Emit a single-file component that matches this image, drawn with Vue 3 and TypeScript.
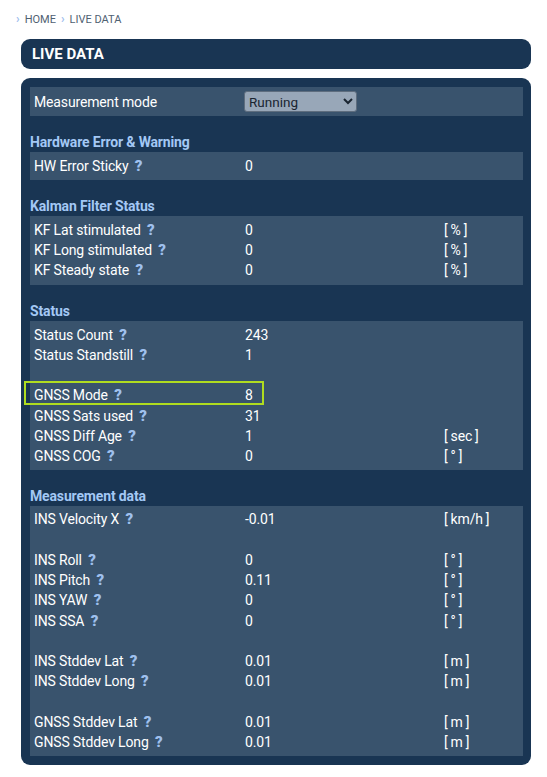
<template>
    <div class="page">
        <nav class="crumbs">
            <span class="crumbs__sep">›</span>
            <span>HOME</span>
            <span class="crumbs__sep">›</span>
            <span>LIVE DATA</span>
        </nav>
        <h1 class="title">LIVE DATA</h1>
        <div class="panel">
            <div class="mode">
                <label class="mode__label" for="mode">Measurement mode</label>
                <select id="mode" class="mode__select">
                    <option>Running</option>
                    <option>Idle</option>
                </select>
            </div>
            <section v-for="section in sections" :key="section.title" class="section">
                <h2 class="section__title">{{ section.title }}</h2>
                <div class="block" :class="{ 'block--short': section.rows.length < 4 }">
                    <div
                        v-for="(row, i) in section.rows"
                        :key="i"
                        class="row"
                        :class="{ 'row--marked': row && row.marked }"
                    >
                        <template v-if="row">
                            <span class="row__label">
                                {{ row.label }}
                                <span class="row__help">?</span>
                            </span>
                            <span>{{ row.value }}</span>
                            <span v-if="row.unit" class="row__unit">
                                <span>[</span>{{ row.unit }}<span>]</span>
                            </span>
                        </template>
                    </div>
                </div>
            </section>
        </div>
    </div>
</template>

<script setup lang="ts">
interface Row {
    label: string;
    value: string;
    unit?: string;
    marked?: boolean;
}

interface Section {
    title: string;
    rows: (Row | null)[];
}

// null = leere Zeile als Abstand
const sections: Section[] = [
    {
        title: 'Hardware Error & Warning',
        rows: [{ label: 'HW Error Sticky', value: '0' }],
    },
    {
        title: 'Kalman Filter Status',
        rows: [
            { label: 'KF Lat stimulated', value: '0', unit: '%' },
            { label: 'KF Long stimulated', value: '0', unit: '%' },
            { label: 'KF Steady state', value: '0', unit: '%' },
        ],
    },
    {
        title: 'Status',
        rows: [
            { label: 'Status Count', value: '243' },
            { label: 'Status Standstill', value: '1' },
            null,
            { label: 'GNSS Mode', value: '8', marked: true },
            { label: 'GNSS Sats used', value: '31' },
            { label: 'GNSS Diff Age', value: '1', unit: 'sec' },
            { label: 'GNSS COG', value: '0', unit: '°' },
        ],
    },
    {
        title: 'Measurement data',
        rows: [
            { label: 'INS Velocity X', value: '-0.01', unit: 'km/h' },
            null,
            { label: 'INS Roll', value: '0', unit: '°' },
            { label: 'INS Pitch', value: '0.11', unit: '°' },
            { label: 'INS YAW', value: '0', unit: '°' },
            { label: 'INS SSA', value: '0', unit: '°' },
            null,
            { label: 'INS Stddev Lat', value: '0.01', unit: 'm' },
            { label: 'INS Stddev Long', value: '0.01', unit: 'm' },
            null,
            { label: 'GNSS Stddev Lat', value: '0.01', unit: 'm' },
            { label: 'GNSS Stddev Long', value: '0.01', unit: 'm' },
        ],
    },
];
</script>

<style>
html,
body {
    background: #fff;
}
</style>

<style scoped>
.page {
    width: 547px;
    height: 777px;
    box-sizing: border-box;
    padding: 12px 16px 0 21px;
    font-family: Roboto, "Liberation Sans", sans-serif;
    font-size: 14px;
    letter-spacing: -0.15px;
    overflow: hidden;
}
.crumbs {
    display: flex;
    align-items: center;
    gap: 5px;
    height: 14px;
    margin-left: -5px;
    font-size: 11px;
    letter-spacing: 0;
    color: #4f6172;
}
.crumbs__sep {
    color: #9fc0ee;
    font-size: 12px;
    font-weight: 700;
}
.title {
    margin: 13px 0 9px;
    height: 30px;
    padding-left: 11px;
    border-radius: 9px;
    background: #193553;
    color: #fff;
    font-size: 15px;
    font-weight: 700;
    letter-spacing: 0;
    line-height: 30px;
}
.panel {
    height: 687px;
    box-sizing: border-box;
    padding: 9px 8px 0 9px;
    border-radius: 9px;
    background: #193553;
    color: #fff;
}
.mode {
    display: grid;
    grid-template-columns: 210px auto;
    justify-content: start;
    align-items: center;
    height: 29px;
    padding-left: 4px;
    background: #39536d;
}
.mode__select {
    width: 113px;
    height: 21px;
    font-family: inherit;
    font-size: 13.5px;
    background: #98a7b8;
    color: #1a2531;
    border: 1px solid #5e6d7e;
    border-radius: 3px;
}
.section__title {
    margin: 0;
    height: 36px;
    box-sizing: border-box;
    padding-top: 17px;
    color: #a3c8f5;
    font-size: 14px;
    font-weight: 700;
    line-height: 19px;
}
.block {
    padding: 3.5px 0 3.5px 4px;
    background: #39536d;
}
.block--short {
    padding-bottom: 4.5px;
}
.row {
    position: relative;
    display: grid;
    grid-template-columns: 211px 199px auto;
    height: 20.25px;
    line-height: 20.25px;
}
.row--marked::after {
    content: "";
    position: absolute;
    left: -10px;
    top: -4px;
    width: 240px;
    height: 24px;
    box-sizing: border-box;
    border: 2px solid #b0dc20;
}
.row__help {
    margin-left: 3px;
    color: #9fc0ee;
    font-size: 15px;
    font-weight: 900;
}
.row__unit {
    grid-column: 3;
    display: flex;
    gap: 3px;
    font-size: 14px;
}
</style>
